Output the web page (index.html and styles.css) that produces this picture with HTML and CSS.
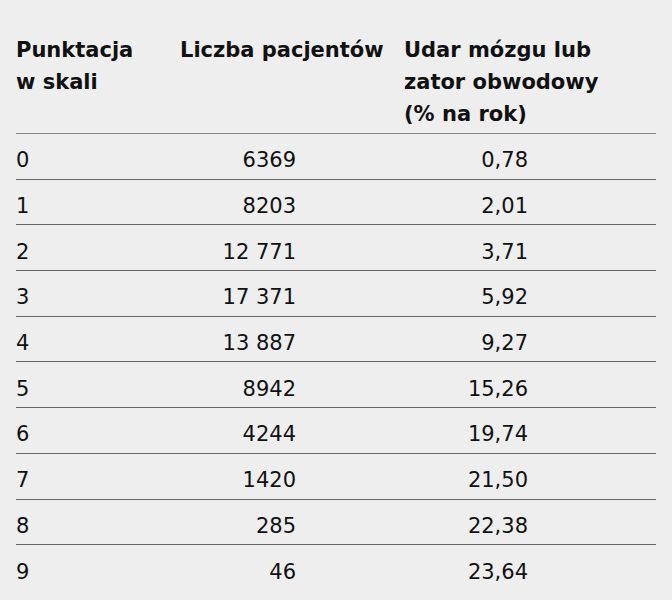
FILE: index.html
```html
<!DOCTYPE html>
<html lang="pl">
<head>
<meta charset="utf-8">
<link rel="stylesheet" href="styles.css">
</head>
<body>
<div class="table">
  <div class="head">
    <div class="h c1">Punktacja<br>w skali</div>
    <div class="h c2">Liczba pacjentów</div>
    <div class="h c3">Udar mózgu lub<br>zator obwodowy<br>(% na rok)</div>
  </div>
  <div class="row"><div class="c1">0</div><div class="c2 num">6369</div><div class="c3 num">0,78</div></div>
  <div class="row"><div class="c1">1</div><div class="c2 num">8203</div><div class="c3 num">2,01</div></div>
  <div class="row"><div class="c1">2</div><div class="c2 num">12 771</div><div class="c3 num">3,71</div></div>
  <div class="row"><div class="c1">3</div><div class="c2 num">17 371</div><div class="c3 num">5,92</div></div>
  <div class="row"><div class="c1">4</div><div class="c2 num">13 887</div><div class="c3 num">9,27</div></div>
  <div class="row"><div class="c1">5</div><div class="c2 num">8942</div><div class="c3 num">15,26</div></div>
  <div class="row"><div class="c1">6</div><div class="c2 num">4244</div><div class="c3 num">19,74</div></div>
  <div class="row"><div class="c1">7</div><div class="c2 num">1420</div><div class="c3 num">21,50</div></div>
  <div class="row"><div class="c1">8</div><div class="c2 num">285</div><div class="c3 num">22,38</div></div>
  <div class="row last"><div class="c1">9</div><div class="c2 num">46</div><div class="c3 num">23,64</div></div>
</div>
</body>
</html>
```
FILE: styles.css
```css
html, body {
  margin: 0;
  padding: 0;
  background: #eeeeee;
}
body {
  font-family: "DejaVu Sans", sans-serif;
  color: #111;
  font-size: 21px;
}
.table {
  margin: 0 16px;
  padding-top: 34px;
}
.head, .row {
  display: grid;
  grid-template-columns: 164px 224px 1fr;
  border-bottom: 1.5px solid #666666;
}
.head {
  line-height: 32px;
  padding-bottom: 3px;
  border-bottom-color: #858585;
}
.h {
  font-weight: 700;
}
.row {
  height: 45.7px;
  box-sizing: border-box;
  align-items: center;
  padding-top: 8px;
}
.row.last {
  border-bottom: none;
}
.c2.num {
  text-align: right;
  padding-right: 108px;
}
.c3.num {
  text-align: right;
  padding-right: 128px;
}
```
